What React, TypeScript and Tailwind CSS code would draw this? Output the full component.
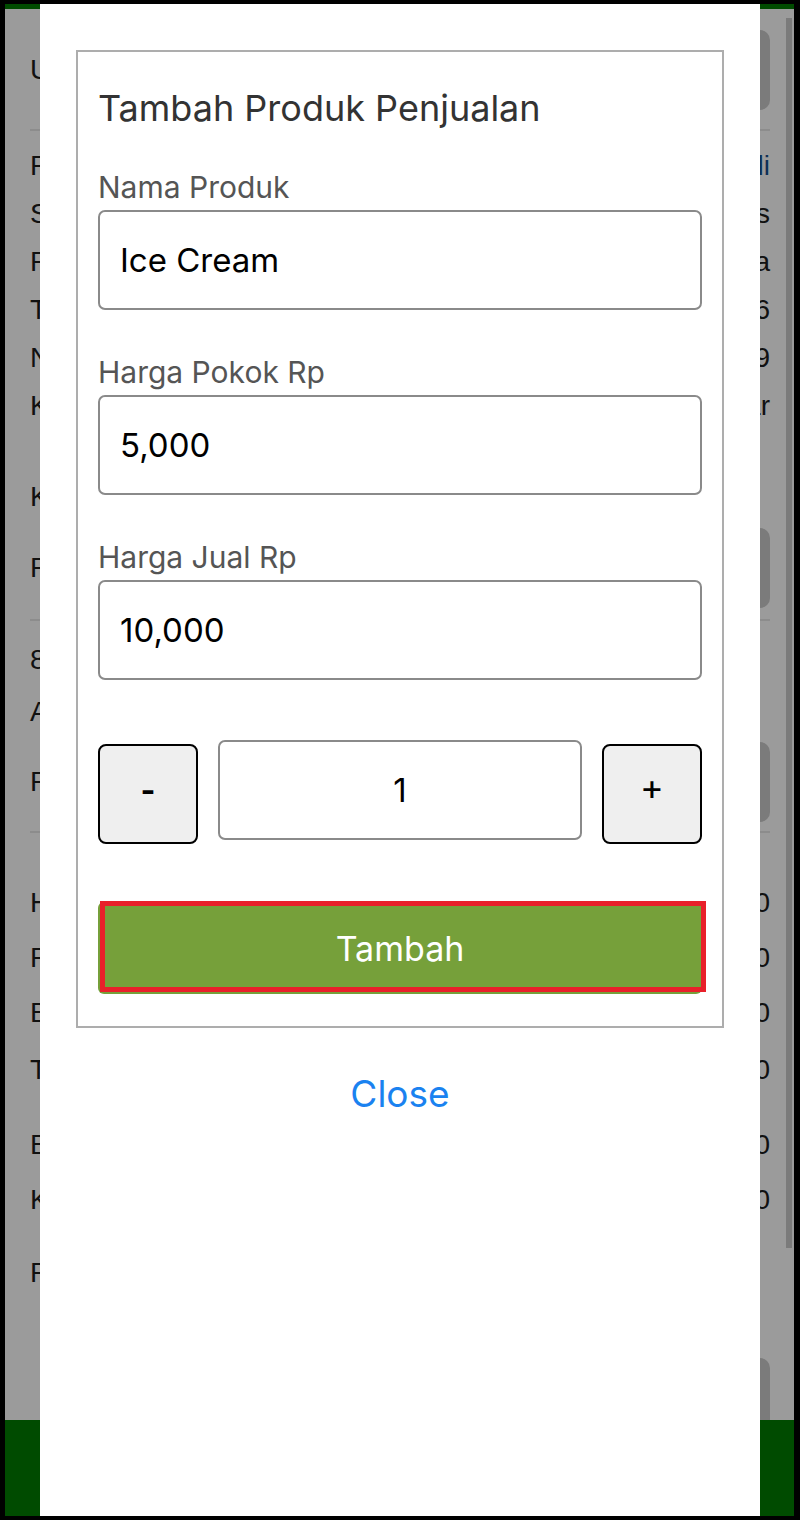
import React from 'react';

type Row = { mt: number; h?: number; left?: string; right?: string; rightBlue?: boolean; box?: boolean; sep?: boolean };

// page behind the modal; only the edges show
const ROWS: Row[] = [
  { mt: 21, h: 80, left: 'Username', box: true },
  { mt: 19, sep: true },
  { mt: 11, left: 'Rekap Penjualan', right: 'Jual Beli', rightBlue: true },
  { mt: 0, left: 'Status', right: 'Lunas' },
  { mt: 0, left: 'Pembayaran', right: 'Tunai Kasir Utama' },
  { mt: 0, left: 'Tanggal', right: '12-05-2026' },
  { mt: 0, left: 'Nomor Nota', right: '00000129' },
  { mt: 0, left: 'Kasir', right: 'Admin Pasar' },
  { mt: 43, left: 'Kategori Produk' },
  { mt: 7, h: 80, left: 'Pilih Kategori', box: true },
  { mt: 11, sep: true },
  { mt: 15, left: '8 Produk Terjual' },
  { mt: 4, left: 'Atur Jumlah' },
  { mt: 6, h: 80, left: 'Rincian Produk', box: true },
  { mt: 9, sep: true },
  { mt: 46, left: 'Harga Pokok', right: '10,000' },
  { mt: 7, left: 'Penjualan', right: '20,000' },
  { mt: 7, left: 'Biaya', right: '0' },
  { mt: 9, left: 'Total Untung', right: '10,000' },
  { mt: 27, left: 'Bayar', right: '20,000' },
  { mt: 7, left: 'Kembalian', right: '0' },
  { mt: 25, left: 'Rekap Harian' },
];

function BackgroundPage() {
  return (
    <div className="flex flex-col h-full bg-[#9b9b9b] font-['Liberation_Sans',Arial,sans-serif] text-[28px] text-[#111]">
      <div className="h-[5px] bg-[#004b00] shrink-0" />
      <div className="flex-1 min-h-0 overflow-hidden flex flex-col pl-[25px] pr-[24px]">
        {ROWS.map((r, i) =>
          r.sep ? (
            <div key={i} className="h-[2px] w-full shrink-0 bg-[#8c8c8c]" style={{ marginTop: r.mt }} />
          ) : (
            <div
              key={i}
              className="flex items-center justify-between shrink-0"
              style={{ marginTop: r.mt, height: r.h ?? 48 }}
            >
              <span>{r.left}</span>
              {r.box ? (
                <span className="w-[90px] h-[80px] rounded-[10px] bg-[#7b7b7b]" />
              ) : (
                <span className={r.rightBlue ? 'text-[#0d2f55]' : ''}>{r.right}</span>
              )}
            </div>
          )
        )}
        <div className="flex justify-end mt-[61px] shrink-0">
          <span className="w-[90px] h-[80px] rounded-[10px] bg-[#7b7b7b]" />
        </div>
      </div>
      <div className="h-[96px] bg-[#004b00] shrink-0" />
    </div>
  );
}

function Field({ label, value, first }: { label: string; value: string; first?: boolean }) {
  return (
    <div className={first ? 'mt-[39px]' : 'mt-[44px]'}>
      <div className="text-[30px] leading-[36px] text-[#555]">{label}</div>
      <input
        readOnly
        value={value}
        className="mt-[5px] w-full h-[100px] rounded-[7px] border-2 border-[#8a8a8a] px-[20px] text-[33px] text-black outline-none"
      />
    </div>
  );
}

export default function App() {
  return (
    <div className="w-[800px] h-[1520px] border-black border-l-[5px] border-r-[6px] border-y-[4px] overflow-hidden">
      <div className="relative w-full h-full overflow-hidden">
        <BackgroundPage />
        {/* scrollbar */}
        <div className="absolute right-[2px] top-[14px] w-[6px] h-[1230px] bg-[#7b7b7b]" />

        {/* modal */}
        <div className="absolute top-0 bottom-0 left-[35px] w-[720px] bg-white z-20 font-['Inter',sans-serif]">
          <div className="mt-[46px] mx-[36px] border-2 border-[#adadad] px-[20px] pt-[34px] pb-[32px]">
            <h2 className="text-[36px] leading-[44px] text-[#333]">Tambah Produk Penjualan</h2>

            <Field first label="Nama Produk" value="Ice Cream" />
            <Field label="Harga Pokok Rp" value="5,000" />
            <Field label="Harga Jual Rp" value="10,000" />

            <div className="mt-[60px] flex items-start gap-[20px]">
              <button className="mt-[4px] w-[100px] h-[100px] shrink-0 rounded-[8px] border-2 border-black bg-[#efefef] pb-[6px] text-[32px] leading-none font-bold text-black">
                -
              </button>
              <input
                readOnly
                value="1"
                className="flex-1 min-w-0 h-[100px] rounded-[7px] border-2 border-[#8a8a8a] text-center text-[33px] text-black outline-none"
              />
              <button className="mt-[4px] w-[100px] h-[100px] shrink-0 rounded-[8px] border-2 border-black bg-[#efefef] pb-[14px] text-[36px] leading-none text-black">
                +
              </button>
            </div>

            <button className="relative mt-[58px] w-full h-[92px] rounded-[6px] bg-[#76a03a] text-[34px] text-white">
              Tambah
              <span className="absolute left-[2px] -top-[1px] -right-[4px] bottom-[2px] border-[5px] border-[#e8202a]" />
            </button>
          </div>

          <div className="mt-[44px] text-center text-[37px] leading-[44px] text-[#1a82f0]">Close</div>
        </div>
      </div>
    </div>
  );
}
